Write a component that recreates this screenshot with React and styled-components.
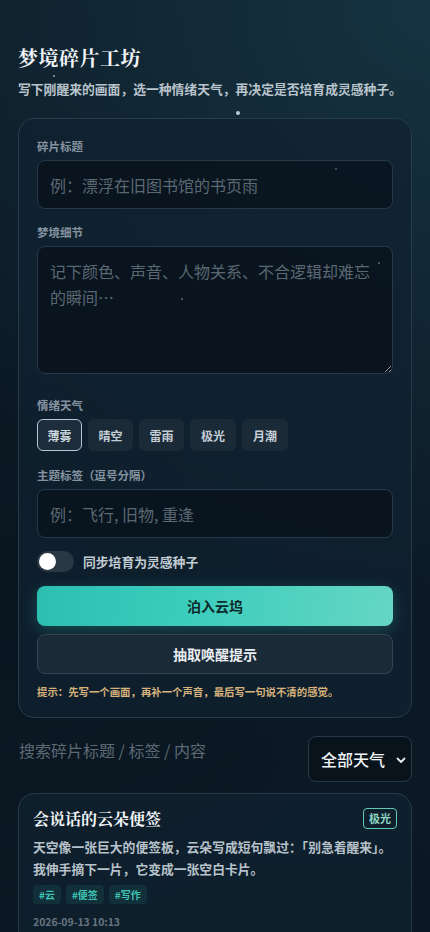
import React, { useState } from "react";
import styled, { createGlobalStyle } from "styled-components";

const Global = createGlobalStyle`
  html, body { margin: 0; padding: 0; background: #0b1823; }
  * { box-sizing: border-box; }
  body { font-family: "Noto Sans CJK SC", "Noto Sans", sans-serif; }
`;

const Page = styled.div`
  position: relative;
  min-height: 932px;
  padding: 43px 18px 40px;
  color: #e8eef2;
  background:
    radial-gradient(circle at 100% 0%, rgba(30, 70, 85, 0.55), transparent 55%),
    radial-gradient(circle at 0% 60%, rgba(8, 20, 30, 0.6), transparent 50%),
    linear-gradient(180deg, #0d1c28 0%, #0b1823 100%);
  overflow: hidden;
`;

const Star = styled.span`
  position: absolute;
  width: ${(p) => p.$s}px;
  height: ${(p) => p.$s}px;
  border-radius: 50%;
  background: rgba(220, 230, 240, ${(p) => p.$o});
`;

const Title = styled.h1`
  margin: 0;
  font-family: "Noto Serif CJK SC", "Noto Serif", serif;
  font-size: 20px;
  font-weight: 700;
  letter-spacing: 0.5px;
  line-height: 30px;
  color: #f2f5f7;
`;

const Subtitle = styled.p`
  margin: 6px 0 0;
  font-size: 12.8px;
  font-weight: 700;
  line-height: 20px;
  color: #b9c4cc;
  white-space: nowrap;
`;

const Card = styled.section`
  margin-top: 19px;
  border: 1px solid #273b49;
  border-radius: 16px;
  background: rgba(16, 34, 48, 0.75);
  padding: 18px 18px 17px;
  display: flex;
  flex-direction: column;
`;

const Label = styled.div`
  font-size: 11.5px;
  font-weight: 700;
  color: #8593a0;
  line-height: 18px;
  margin: ${(p) => p.$mt || 0}px 0 5px;
`;

const Input = styled.input`
  display: block;
  width: 100%;
  height: 49px;
  border: 1px solid #26394a;
  border-radius: 8px;
  background: rgba(8, 18, 27, 0.8);
  padding: 0 12px;
  font-family: inherit;
  font-size: 16px;
  color: #e8eef2;
  outline: none;
  &::placeholder { color: #5b6872; }
`;

const TextArea = styled.textarea`
  display: block;
  width: 100%;
  height: 128px;
  resize: vertical;
  border: 1px solid #26394a;
  border-radius: 8px;
  background: rgba(8, 18, 27, 0.8);
  padding: 11px 12px;
  font-family: inherit;
  font-size: 16px;
  line-height: 26px;
  color: #e8eef2;
  outline: none;
  &::placeholder { color: #5b6872; }
`;

const Chips = styled.div`
  display: flex;
  gap: 6px;
`;

const Chip = styled.button`
  width: ${(p) => p.$w}px;
  height: 32px;
  border-radius: 6px;
  border: 1px solid ${(p) => (p.$active ? "#b4c7d4" : "transparent")};
  background: ${(p) => (p.$active ? "#1d2d3b" : "#1a2a37")};
  color: ${(p) => (p.$active ? "#c9d6de" : "#c4ced6")};
  font-family: inherit;
  font-size: 12px;
  font-weight: 700;
  padding: 0;
  cursor: pointer;
`;

const ToggleRow = styled.label`
  display: flex;
  align-items: center;
  gap: 9px;
  margin-top: 13px;
  font-size: 12.8px;
  font-weight: 700;
  color: #c2ccd4;
`;

const Track = styled.span`
  position: relative;
  width: 37px;
  height: 21px;
  border-radius: 11px;
  background: #2a3845;
  flex-shrink: 0;
`;

const Knob = styled.span`
  position: absolute;
  top: 2px;
  left: 2px;
  width: 17px;
  height: 17px;
  border-radius: 50%;
  background: #ffffff;
`;

const PrimaryButton = styled.button`
  margin-top: 14px;
  height: 40px;
  border: none;
  border-radius: 8px;
  background: linear-gradient(100deg, #2cbfb0 0%, #3dcdbd 45%, #66d6c4 100%);
  box-shadow: 0 4px 16px rgba(50, 200, 185, 0.28);
  color: #0d2a2a;
  font-family: inherit;
  font-size: 14px;
  font-weight: 700;
  cursor: pointer;
`;

const SecondaryButton = styled.button`
  margin-top: 8px;
  height: 40px;
  border: 1px solid #324553;
  border-radius: 8px;
  background: #1b2a37;
  color: #e9eef2;
  font-family: inherit;
  font-size: 14px;
  font-weight: 700;
  cursor: pointer;
`;

const Hint = styled.p`
  margin: 10px 0 0;
  font-size: 10.4px;
  font-weight: 700;
  line-height: 16px;
  color: #d6b27c;
`;

const FilterRow = styled.div`
  margin-top: 18px;
  display: flex;
  align-items: flex-start;
  gap: 10px;
`;

const Search = styled.input`
  flex: 1;
  min-width: 0;
  height: 28px;
  border: none;
  background: transparent;
  padding: 0 1px;
  font-family: inherit;
  font-size: 16px;
  color: #e8eef2;
  outline: none;
  &::placeholder { color: #5d6973; }
`;

const SelectWrap = styled.div`
  position: relative;
  width: 104px;
  height: 46px;
  border: 1px solid #26394a;
  border-radius: 8px;
  background: #08131c;
  display: flex;
  align-items: center;
  padding-left: 12px;
  font-size: 16px;
  font-weight: 500;
  color: #f0f4f6;
  flex-shrink: 0;
`;

const Chevron = styled.svg`
  position: absolute;
  right: 4px;
  top: 17px;
`;

const Entry = styled.article`
  margin-top: 11px;
  border: 1px solid #273b49;
  border-radius: 16px;
  background: rgba(16, 34, 48, 0.75);
  padding: 14px 14px 16px;
`;

const EntryHead = styled.div`
  display: flex;
  justify-content: space-between;
  align-items: flex-start;
`;

const EntryTitle = styled.h2`
  margin: 0;
  font-family: "Noto Serif CJK SC", "Noto Serif", serif;
  font-size: 16px;
  font-weight: 700;
  line-height: 21px;
  color: #f2f5f7;
`;

const Badge = styled.span`
  border: 1px solid #62c9b2;
  border-radius: 4px;
  padding: 2px 5px;
  font-size: 11px;
  font-weight: 700;
  line-height: 15px;
  color: #8fd9c4;
`;

const Body = styled.p`
  margin: 7px 0 0;
  font-size: 12.8px;
  font-weight: 700;
  line-height: 22px;
  color: #b7c2ca;
`;

const Tags = styled.div`
  display: flex;
  gap: 5px;
  margin-top: 5px;
`;

const Tag = styled.span`
  background: #12303a;
  color: #3ec2b2;
  border-radius: 4px;
  padding: 2px 6px;
  font-size: 10px;
  font-weight: 700;
  line-height: 15px;
`;

const Date = styled.div`
  margin-top: 10px;
  font-size: 10.4px;
  font-weight: 700;
  line-height: 16px;
  color: #68757f;
`;

const weathers = [
  ["薄雾", 45],
  ["晴空", 45],
  ["雷雨", 45],
  ["极光", 46],
  ["月潮", 46],
];

const stars = [
  { x: 53, y: 75, s: 1.5, o: 0.6 },
  { x: 236, y: 111, s: 4, o: 0.85 },
  { x: 335, y: 168, s: 2, o: 0.35 },
  { x: 181, y: 298, s: 2, o: 0.4 },
  { x: 378, y: 262, s: 1.5, o: 0.35 },
];

export default function App() {
  const [active, setActive] = useState("薄雾");
  return (
    <>
      <Global />
      <Page>
        {stars.map((s, i) => (
          <Star key={i} $s={s.s} $o={s.o} style={{ left: s.x, top: s.y }} />
        ))}
        <Title>梦境碎片工坊</Title>
        <Subtitle>写下刚醒来的画面，选一种情绪天气，再决定是否培育成灵感种子。</Subtitle>
        <Card>
          <Label>碎片标题</Label>
          <Input placeholder="例：漂浮在旧图书馆的书页雨" />
          <Label $mt={14}>梦境细节</Label>
          <TextArea placeholder="记下颜色、声音、人物关系、不合逻辑却难忘的瞬间…" />
          <Label $mt={22}>情绪天气</Label>
          <Chips>
            {weathers.map(([w, width]) => (
              <Chip key={w} $w={width} $active={active === w} onClick={() => setActive(w)}>
                {w}
              </Chip>
            ))}
          </Chips>
          <Label $mt={15}>主题标签（逗号分隔）</Label>
          <Input placeholder="例：飞行, 旧物, 重逢" />
          <ToggleRow>
            <Track>
              <Knob />
            </Track>
            同步培育为灵感种子
          </ToggleRow>
          <PrimaryButton>泊入云坞</PrimaryButton>
          <SecondaryButton>抽取唤醒提示</SecondaryButton>
          <Hint>提示：先写一个画面，再补一个声音，最后写一句说不清的感觉。</Hint>
        </Card>
        <FilterRow>
          <Search placeholder="搜索碎片标题 / 标签 / 内容" />
          <SelectWrap>
            全部天气
            <Chevron width="12" height="12" viewBox="0 0 12 12">
              <path d="M2.5 4.5 L6 8 L9.5 4.5" fill="none" stroke="#e8eef2" strokeWidth="1.8" strokeLinecap="round" strokeLinejoin="round" />
            </Chevron>
          </SelectWrap>
        </FilterRow>
        <Entry>
          <EntryHead>
            <EntryTitle>会说话的云朵便签</EntryTitle>
            <Badge>极光</Badge>
          </EntryHead>
          <Body>天空像一张巨大的便签板，云朵写成短句飘过：「别急着醒来」。我伸手摘下一片，它变成一张空白卡片。</Body>
          <Tags>
            <Tag>#云</Tag>
            <Tag>#便签</Tag>
            <Tag>#写作</Tag>
          </Tags>
          <Date>2026-09-13 10:13</Date>
        </Entry>
      </Page>
    </>
  );
}
